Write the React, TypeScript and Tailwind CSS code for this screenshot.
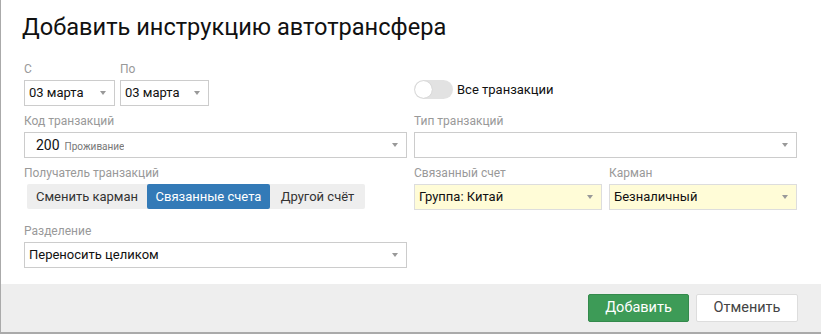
import React from 'react';

const Caret = () => (
    <span className="ml-auto shrink-0 border-x-[3px] border-t-[4px] border-x-transparent border-t-[#999] w-0 h-0" />
);

interface SelectProps {
    className?: string;
    children?: React.ReactNode;
}

const Select: React.FC<SelectProps> = ({ className = '', children }) => (
    <div className={`flex items-center h-[26px] border border-[#ccc] pl-[4px] pr-[8px] text-[13px] text-[#111] ${className}`}>
        <span className="flex items-baseline gap-[5px] truncate">{children}</span>
        <Caret />
    </div>
);

const Label: React.FC<{ children: React.ReactNode }> = ({ children }) => (
    <div className="text-[12px] leading-[14px] text-[#999] mb-[4px]">{children}</div>
);

const App: React.FC = () => {
    return (
        <div className="w-[821px] h-[334px] bg-white border-l border-b-2 border-[#aaa] flex flex-col" style={{ fontFamily: 'Roboto, "Noto Sans", sans-serif' }}>
            {/* Header */}
            <div className="px-[21px] pt-[11px] h-[62px]">
                <h1 className="text-[23.6px] leading-[32px] text-[#111]">Добавить инструкцию автотрансфера</h1>
            </div>

            {/* Body */}
            <div className="flex flex-col px-[23px] flex-1">
                <div className="flex gap-[7px] h-[52px]">
                    <div className="flex gap-[5px] w-[383px]">
                        <div>
                            <Label>С</Label>
                            <Select className="w-[91px] h-[24px]">03 марта</Select>
                        </div>
                        <div>
                            <Label>По</Label>
                            <Select className="w-[89px] h-[24px]">03 марта</Select>
                        </div>
                    </div>
                    <div className="flex items-center gap-[4px] h-[19px] mt-[18px]">
                        <div className="relative w-[39px] h-[19px] rounded-full bg-[#e2e2e2]">
                            <div className="absolute left-[1px] top-[1px] w-[17px] h-[17px] rounded-full bg-white shadow-[0_0_1px_rgba(0,0,0,0.25)]" />
                        </div>
                        <span className="text-[13px] text-[#111]">Все транзакции</span>
                    </div>
                </div>

                <div className="flex gap-[7px] h-[52px]">
                    <div className="w-[383px]">
                        <Label>Код транзакций</Label>
                        <Select className="pl-[11px]">
                            <span className="text-[14px]">200</span>
                            <span className="text-[10px] text-[#777]">Проживание</span>
                        </Select>
                    </div>
                    <div className="w-[383px]">
                        <Label>Тип транзакций</Label>
                        <Select />
                    </div>
                </div>

                <div className="flex gap-[7px] h-[58px]">
                    <div className="w-[383px]">
                        <Label>Получатель транзакций</Label>
                        <div className="flex ml-[3px] mt-[3px] h-[25px] text-[13px] w-fit rounded-[2px] bg-[#eee] text-[#333] whitespace-nowrap">
                            <div className="flex items-center justify-center w-[120px]">Сменить карман</div>
                            <div className="flex items-center justify-center w-[123px] bg-[#337ab7] text-white rounded-[2px]">Связанные счета</div>
                            <div className="flex items-center justify-center w-[95px]">Другой счёт</div>
                        </div>
                    </div>
                    <div className="w-[188px]">
                        <Label>Связанный счет</Label>
                        <Select className="h-[24px] bg-[#fffcd7] border-[#ddd] pl-[2px]">Группа: Китай</Select>
                    </div>
                    <div className="w-[188px]">
                        <Label>Карман</Label>
                        <Select className="h-[24px] bg-[#fffcd7] border-[#ddd] pl-[2px]">Безналичный</Select>
                    </div>
                </div>

                <div className="w-[383px]">
                    <Label>Разделение</Label>
                    <Select>Переносить целиком</Select>
                </div>
            </div>

            {/* Footer */}
            <div className="h-[48px] bg-[#eee] flex items-center justify-end gap-[7px] pr-[23px]">
                <button className="w-[101px] h-[28px] rounded-[2px] bg-[#3d9b57] border border-[#348a4c] text-white text-[14.5px]">Добавить</button>
                <button className="w-[102px] h-[28px] rounded-[2px] bg-white border border-[#ddd] text-[#444] text-[14.5px]">Отменить</button>
            </div>
        </div>
    );
};

export default App;
